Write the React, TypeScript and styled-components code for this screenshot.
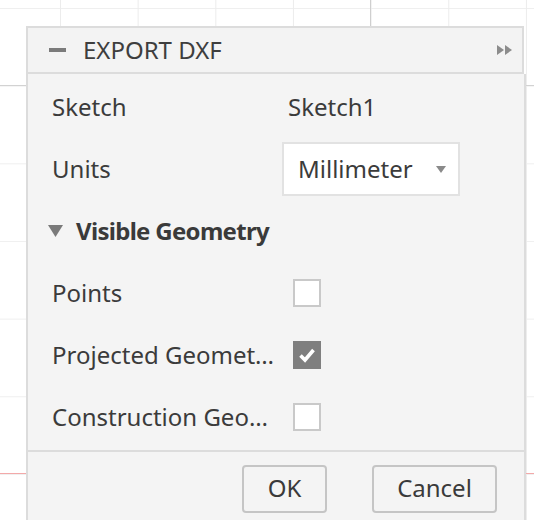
import React from "react";
import styled, { createGlobalStyle } from "styled-components";

const GlobalStyle = createGlobalStyle`
  html, body { margin: 0; padding: 0; background: #ffffff; }
  body { font-family: "Noto Sans", "Open Sans", sans-serif; }
`;

const Canvas = styled.div`
  width: 534px;
  height: 520px;
  overflow: hidden;
  box-sizing: border-box;
  padding: 26px 0 0 26px;
  background-color: #ffffff;
  background-image:
    linear-gradient(to right, #cfcfcf 1px, transparent 1px),
    linear-gradient(to bottom, #d2d2d2 1px, transparent 1px),
    linear-gradient(to bottom, #f3a9a9 1px, transparent 1px),
    linear-gradient(to right, #ececec 1px, transparent 1px),
    linear-gradient(to bottom, #efefef 1px, transparent 1px);
  background-repeat: no-repeat, no-repeat, no-repeat, repeat, repeat;
  background-size: 1px 100%, 100% 1px, 100% 1px, 77.67px 100%, 100% 77.67px;
  background-position: 370px 0, 0 85px, 0 473px, 60px 0, 0 8px;
`;

const Panel = styled.div`
  width: 500px;
  height: 494px;
  display: flex;
  flex-direction: column;
  color: #3b3b3b;
`;

const Header = styled.div`
  width: 498px;
  height: 48px;
  box-sizing: border-box;
  flex: none;
  display: flex;
  align-items: center;
  padding: 0 9px 0 21px;
  border: 2px solid #dcdcdc;
  background: #f3f3f3;
`;

const CollapseBar = styled.span`
  width: 17px;
  height: 4px;
  background: #7b7b7b;
  flex: none;
`;

const Title = styled.div`
  margin-left: 17px;
  flex: 1;
  font-size: 24px;
  line-height: 32px;
  font-weight: 400;
  color: #3e3e3e;
`;

const Body = styled.div`
  flex: 1;
  display: flex;
  flex-direction: column;
  border-left: 2px solid #dcdcdc;
  border-right: 2px solid #dcdcdc;
  background: #f4f4f4;
`;

const Rows = styled.div`
  padding: 2px 24px 2px 24px;
  display: flex;
  flex-direction: column;
`;

const Row = styled.div`
  height: 62px;
  display: grid;
  grid-template-columns: 225px 1fr;
  column-gap: 5px;
  align-items: center;
`;

const Label = styled.div`
  font-size: 24px;
  line-height: 36px;
  white-space: nowrap;
  overflow: hidden;
  text-overflow: ellipsis;
`;

const ValueText = styled.div<{ $indent?: number }>`
  font-size: 24px;
  line-height: 36px;
  padding-left: ${(p) => p.$indent ?? 0}px;
`;

const Select = styled.div`
  width: 178px;
  height: 54px;
  box-sizing: border-box;
  border: 2px solid #e2e2e2;
  background: #ffffff;
  display: flex;
  align-items: center;
  justify-content: space-between;
  padding: 0 12px 0 14px;
  font-size: 24px;
  line-height: 36px;
`;

const Caret = styled.span`
  width: 0;
  height: 0;
  border-left: 5px solid transparent;
  border-right: 5px solid transparent;
  border-top: 7px solid #8a8a8a;
`;

const SectionRow = styled.div`
  height: 62px;
  display: flex;
  align-items: center;
  margin-left: -4px;
`;

const SectionTitle = styled.div`
  margin-left: 13px;
  font-size: 24px;
  line-height: 36px;
  font-weight: 700;
  letter-spacing: -0.7px;
  color: #3a3a3a;
`;

const Box = styled.span<{ $checked?: boolean }>`
  margin-left: 11px;
  width: 28px;
  height: 28px;
  box-sizing: border-box;
  border: 2px solid ${(p) => (p.$checked ? "#7f7f7f" : "#c9c9c9")};
  background: ${(p) => (p.$checked ? "#7f7f7f" : "#ffffff")};
  display: flex;
  align-items: center;
  justify-content: center;
`;

const Footer = styled.div`
  border-top: 2px solid #dcdcdc;
  display: flex;
  justify-content: flex-end;
  gap: 45px;
  padding: 13px 27px 0 0;
`;

const Button = styled.button<{ $width: number }>`
  width: ${(p) => p.$width}px;
  height: 48px;
  box-sizing: border-box;
  border: 2px solid #c5c5c5;
  border-radius: 4px;
  background: #f4f4f4;
  font-family: "Noto Sans", "Open Sans", sans-serif;
  font-size: 24px;
  line-height: 32px;
  color: #3a3a3a;
  padding: 0 0 2px 0;
`;

const DownTriangle = () => (
  <svg width="15" height="12" viewBox="0 0 15 12">
    <polygon points="0,0 15,0 7.5,12" fill="#7a7a7a" />
  </svg>
);

const DockArrows = () => (
  <svg width="16" height="10" viewBox="0 0 16 10">
    <polygon points="0,0 7,5 0,10" fill="#8c8c8c" />
    <polygon points="8,0 15,5 8,10" fill="#8c8c8c" />
  </svg>
);

const Check = () => (
  <svg width="22" height="22" viewBox="0 0 22 22">
    <path d="M4.5 11.5 L9 16 L17.5 6" fill="none" stroke="#ffffff" strokeWidth="3.6" />
  </svg>
);

const CheckRow = ({ label, checked }: { label: string; checked?: boolean }) => (
  <Row>
    <Label>{label}</Label>
    <Box $checked={checked}>{checked && <Check />}</Box>
  </Row>
);

export default function App() {
  return (
    <>
      <GlobalStyle />
      <Canvas>
        <Panel>
          <Header>
            <CollapseBar />
            <Title>EXPORT DXF</Title>
            <DockArrows />
          </Header>
          <Body>
            <Rows>
              <Row>
                <Label>Sketch</Label>
                <ValueText $indent={6}>Sketch1</ValueText>
              </Row>
              <Row>
                <Label>Units</Label>
                <Select>
                  <span>Millimeter</span>
                  <Caret />
                </Select>
              </Row>
              <SectionRow>
                <DownTriangle />
                <SectionTitle>Visible Geometry</SectionTitle>
              </SectionRow>
              <CheckRow label="Points" />
              <CheckRow label="Projected Geometry" checked />
              <CheckRow label="Construction Geometry" />
            </Rows>
            <Footer>
              <Button $width={85}>OK</Button>
              <Button $width={125}>Cancel</Button>
            </Footer>
          </Body>
        </Panel>
      </Canvas>
    </>
  );
}
